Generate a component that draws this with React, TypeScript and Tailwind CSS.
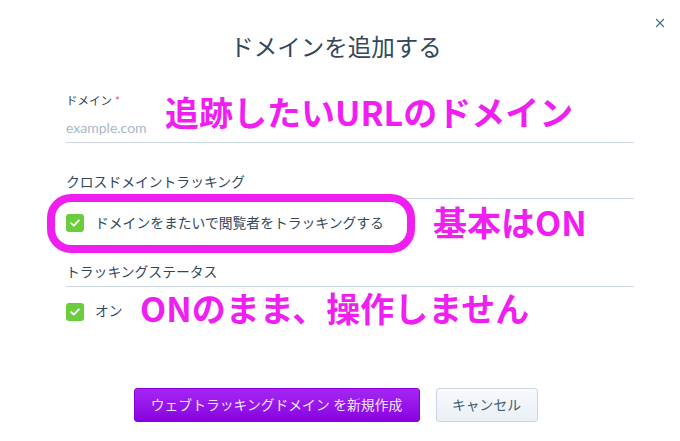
import { X } from "lucide-react";

const ui = "font-['Lato','Noto_Sans_CJK_JP',sans-serif]";
const mark = "font-['Noto_Sans_CJK_JP',sans-serif] font-bold text-[34px] leading-[38px] text-[#f01ef0] whitespace-nowrap";

function Check() {
  return (
    <span className="flex h-[18px] w-[18px] shrink-0 items-center justify-center rounded-[3px] bg-[#6acd3d]">
      <svg width="10" height="8" viewBox="0 0 10 8" fill="none">
        <path d="M1.2 4.2 3.8 6.6 8.8 1.4" stroke="white" strokeWidth="1.9" strokeLinecap="round" strokeLinejoin="round" />
      </svg>
    </span>
  );
}

export default function App() {
  return (
    <div className={`relative h-[441px] w-[680px] overflow-hidden bg-white text-[#33475b] ${ui}`}>
      <button className="absolute right-[13px] top-[16px] text-[#516f90]">
        <X size={14} strokeWidth={2.2} />
      </button>

      <h1 className="pr-[8px] pt-[31px] text-center text-[23.5px] leading-[32px] font-normal">ドメインを追加する</h1>

      <div className="pl-[66px] pr-[46px]">
        {/* domain field */}
        <div className="mt-[30px] border-b border-[#cbd6e2] pb-[4px]">
          <div className="flex items-start">
            <div className="w-[99px] shrink-0">
              <div className="text-[11.5px] leading-[16px]">
                ドメイン <span className="text-[#f2545b]">*</span>
              </div>
              <div className="mt-[8px] text-[14px] leading-[21px] text-[#aab8c6]">example.com</div>
            </div>
            <div className={`${mark} mt-0`}>追跡したいURLのドメイン</div>
          </div>
        </div>

        {/* cross-domain tracking */}
        <div className="mt-[29px] border-b border-[#cbd6e2] pb-[6px] text-[13.8px] leading-[20px]">
          クロスドメイントラッキング
        </div>
        <div className="relative flex h-[48px] items-center">
          <div className="absolute left-[-19px] top-[-5px] h-[59px] w-[368px] rounded-[24px] border-[8px] border-[#f01ef0]" />
          <label className="flex w-[367px] shrink-0 items-center gap-[11px] text-[13.8px]">
            <Check />
            ドメインをまたいで閲覧者をトラッキングする
          </label>
          <div className={`${mark} mb-[2px]`}>基本はON</div>
        </div>

        {/* tracking status */}
        <div className="mt-[15px] border-b border-[#cbd6e2] pb-[4px] text-[13.8px] leading-[20px]">
          トラッキングステータス
        </div>
        <div className="flex h-[49px] items-center">
          <label className="flex w-[74px] shrink-0 items-center gap-[11px] text-[13.8px]">
            <Check />
            オン
          </label>
          <div className={`${mark} mb-[8px]`}>ONのまま、操作しません</div>
        </div>
      </div>

      {/* actions */}
      <div className="mr-[9px] mt-[52px] flex justify-center gap-[16px]">
        <button className="h-[34px] w-[286px] rounded-[3px] border border-[#8a00d8] bg-gradient-to-b from-[#a524f4] to-[#8800e0] text-[13.8px] text-[#f3e6ff]">
          ウェブトラッキングドメイン を新規作成
        </button>
        <button className="h-[34px] w-[102px] rounded-[3px] border border-[#cbd6e2] bg-gradient-to-b from-[#f8fafc] to-[#eaf0f6] text-[13.8px] text-[#425b76]">
          キャンセル
        </button>
      </div>
    </div>
  );
}
